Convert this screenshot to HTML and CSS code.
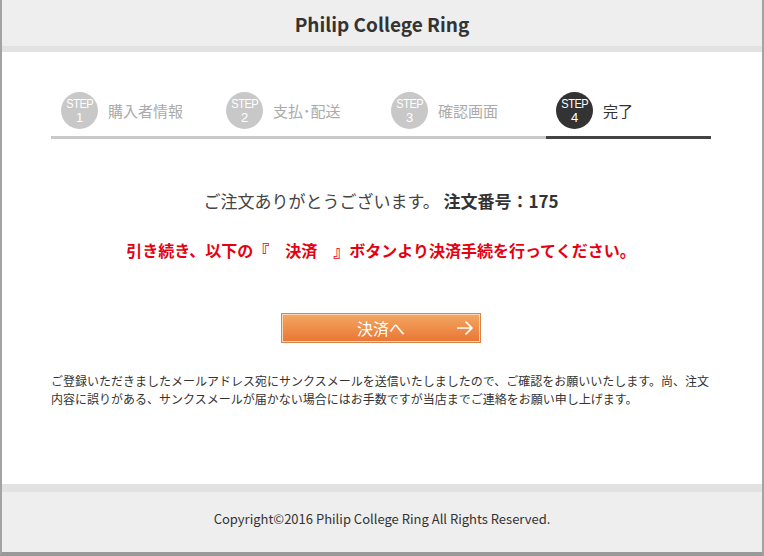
FILE: index.html
```html
<!DOCTYPE html>
<html lang="ja">
<head>
<meta charset="utf-8">
<title>Philip College Ring</title>
<link rel="stylesheet" href="styles.css">
</head>
<body>
<div class="page">
  <header class="site-header">
    <h1 class="site-title">Philip College Ring</h1>
  </header>
  <main class="content">
    <ol class="steps">
      <li class="step"><span class="badge"><span class="badge-s">STEP</span><span class="badge-n">1</span></span><span class="step-label">購入者情報</span></li>
      <li class="step"><span class="badge"><span class="badge-s">STEP</span><span class="badge-n">2</span></span><span class="step-label">支払･配送</span></li>
      <li class="step"><span class="badge"><span class="badge-s">STEP</span><span class="badge-n">3</span></span><span class="step-label">確認画面</span></li>
      <li class="step step-active"><span class="badge"><span class="badge-s">STEP</span><span class="badge-n">4</span></span><span class="step-label">完了</span></li>
    </ol>
    <p class="thanks">ご注文ありがとうございます。 <strong>注文番号：175</strong></p>
    <p class="notice">引き続き、以下の『　決済　』ボタンより決済手続を行ってください。</p>
    <div class="btn-wrap">
      <a class="pay-btn" href="#"><span class="pay-text">決済へ</span>
        <svg class="pay-arrow" width="18" height="16" viewBox="0 0 18 16"><path d="M1 8H16M9.5 1.5L16 8L9.5 14.5" fill="none" stroke="#fff" stroke-width="1.6"/></svg>
      </a>
    </div>
    <p class="info">ご登録いただきましたメールアドレス宛にサンクスメールを送信いたしましたので、ご確認をお願いいたします。尚、注文内容に誤りがある、サンクスメールが届かない場合にはお手数ですが当店までご連絡をお願い申し上げます。</p>
  </main>
  <footer class="site-footer">
    <p class="copy">Copyright©2016 Philip College Ring All Rights Reserved.</p>
  </footer>
</div>
</body>
</html>
```
FILE: styles.css
```css
* { box-sizing: border-box; }
html, body { margin: 0; padding: 0; }
body {
  font-family: "Noto Sans CJK JP", "Noto Sans", sans-serif;
  color: #333;
  background: #fff;
}
.page {
  width: 764px;
  height: 556px;
  border-left: 2px solid #a3a3a3;
  border-right: 2px solid #a3a3a3;
  border-bottom: 4px solid #999;
  display: flex;
  flex-direction: column;
}
.site-header {
  height: 52px;
  background: #eeeeee;
  border-bottom: 6px solid #e2e2e2;
  display: flex;
  align-items: center;
  justify-content: center;
}
.site-title {
  margin: 0;
  font-size: 19px;
  font-weight: bold;
  color: #333;
  line-height: 1;
}
.content {
  flex: 1;
  padding: 40px 51px 0 49px;
}
.steps {
  list-style: none;
  margin: 0;
  padding: 0;
  display: flex;
}
.step {
  flex: 1;
  display: flex;
  align-items: center;
  gap: 10px;
  padding: 0 0 7px 10px;
  border-bottom: 3px solid #c9c9c9;
}
.step-active { border-bottom-color: #444; }
.badge {
  width: 37px;
  height: 37px;
  border-radius: 50%;
  background: #c8c8c8;
  color: #fff;
  display: flex;
  flex-direction: column;
  align-items: center;
  justify-content: center;
  font-family: "Liberation Sans", sans-serif;
  line-height: 1;
}
.badge-s { font-size: 13px; letter-spacing: -0.6px; transform: scaleX(0.85); }
.badge-n { font-size: 13px; margin-top: 1px; }
.step-active .badge { background: #333; }
.step-label {
  font-size: 15px;
  color: #aaa;
}
.step-active .step-label { color: #333; }
.thanks {
  margin: 50px 0 0;
  text-align: center;
  font-size: 17px;
  line-height: 24px;
  color: #444;
}
.thanks strong { color: #333; font-weight: bold; }
.notice {
  margin: 25px 0 0;
  text-align: center;
  color: #e60012;
  font-weight: bold;
  font-size: 16px;
  line-height: 24px;
}
.btn-wrap {
  margin-top: 51px;
  display: flex;
  justify-content: center;
}
.pay-btn {
  position: relative;
  width: 200px;
  height: 30px;
  border: 1px solid #d9824a;
  box-shadow: inset 0 0 0 1px #f8d8bd;
  background: linear-gradient(#f3a862, #ea7533);
  color: #fff;
  text-decoration: none;
  display: flex;
  align-items: center;
  justify-content: center;
  font-size: 16px;
}
.pay-text { line-height: 1; }
.pay-arrow {
  position: absolute;
  right: 6px;
  top: 6px;
}
.info {
  margin: 29px 0 0;
  font-size: 12px;
  line-height: 18px;
  color: #333;
}
.site-footer {
  height: 68px;
  background: #eeeeee;
  border-top: 8px solid #e2e2e2;
  display: flex;
  align-items: center;
  justify-content: center;
  padding-bottom: 8px;
}
.copy {
  margin: 0;
  font-size: 13px;
  color: #333;
}
```
